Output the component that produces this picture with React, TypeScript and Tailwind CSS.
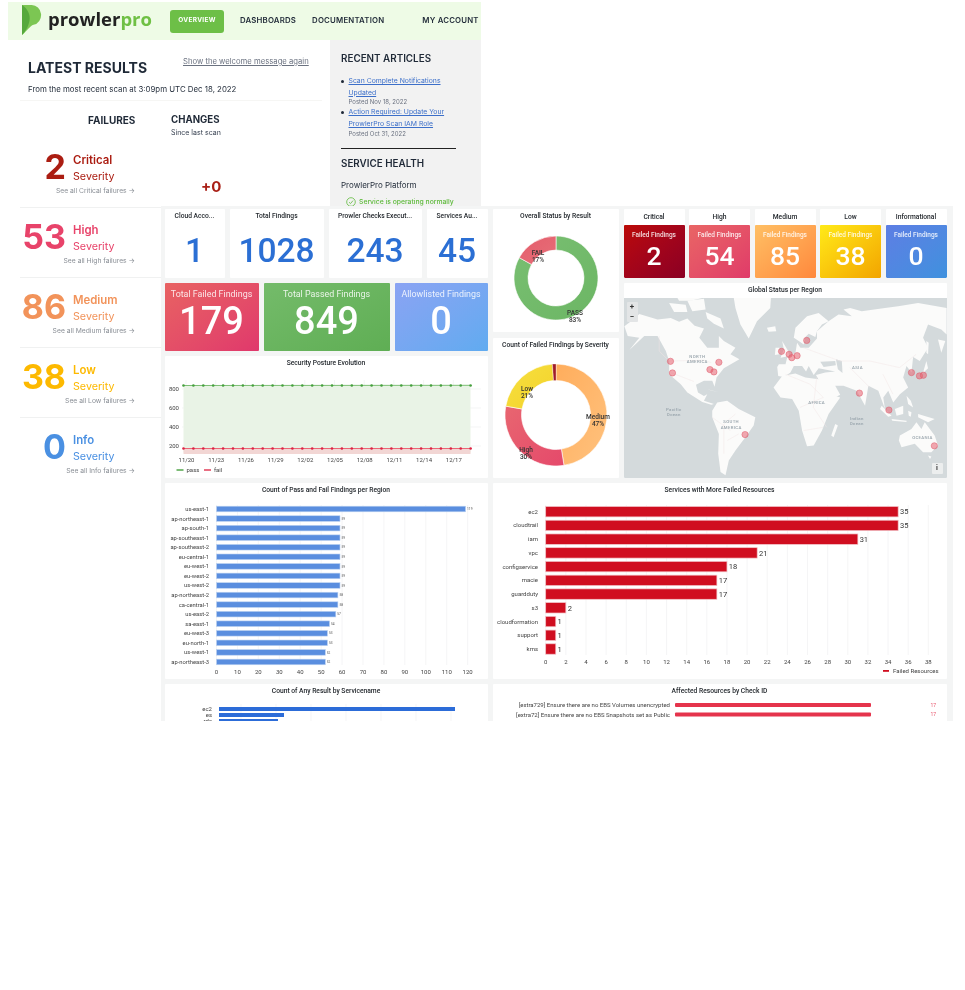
const severities = [
  { n: "53", name: "High", text: "text-[#e8436a]" },
  { n: "86", name: "Medium", text: "text-[#f2935a]" },
  { n: "38", name: "Low", text: "text-[#fdb900]" },
  { n: "0", name: "Info", text: "text-[#4a90e2]" },
];

const regions: [string, number][] = [
  ["us-east-1", 119], ["ap-northeast-1", 59], ["ap-south-1", 59], ["ap-southeast-1", 59],
  ["ap-southeast-2", 59], ["eu-central-1", 59], ["eu-west-1", 59], ["eu-west-2", 59],
  ["us-west-2", 59], ["ap-northeast-2", 58], ["ca-central-1", 58], ["us-east-2", 57],
  ["sa-east-1", 54], ["eu-west-3", 53], ["eu-north-1", 53], ["us-west-1", 52], ["ap-northeast-3", 52],
];

const services: [string, number][] = [
  ["ec2", 35], ["cloudtrail", 35], ["iam", 31], ["vpc", 21], ["configservice", 18], ["macie", 17],
  ["guardduty", 17], ["s3", 2], ["cloudformation", 1], ["support", 1], ["kms", 1],
];

const dates = ["11/20", "11/23", "11/26", "11/29", "12/02", "12/05", "12/08", "12/11", "12/14", "12/17"];

function arc(cx: number, cy: number, r: number, ir: number, from: number, to: number) {
  const p = (rad: number, deg: number) => {
    const a = ((deg - 90) * Math.PI) / 180;
    return `${(cx + rad * Math.cos(a)).toFixed(2)} ${(cy + rad * Math.sin(a)).toFixed(2)}`;
  };
  const large = to - from > 180 ? 1 : 0;
  return `M${p(r, from)}A${r} ${r} 0 ${large} 1 ${p(r, to)}L${p(ir, to)}A${ir} ${ir} 0 ${large} 0 ${p(ir, from)}Z`;
}

function Panel({ title, className, children }: { title: string; className: string; children: React.ReactNode }) {
  return (
    <div className={`flex flex-col overflow-hidden rounded-[1px] bg-white ${className}`}>
      <div className="flex h-[15px] shrink-0 items-center justify-center whitespace-nowrap text-[6.7px] font-medium text-[#24292e]">
        {title}
      </div>
      {children}
    </div>
  );
}

function Stat({ title, value, className }: { title: string; value: string; className: string }) {
  return (
    <Panel title={title} className={className}>
      <div className="flex flex-1 items-center justify-center text-[33.5px] leading-none font-medium text-[#2b6fd4]">
        {value}
      </div>
    </Panel>
  );
}

function Total({ title, value, className }: { title: string; value: string; className: string }) {
  return (
    <div className={`flex flex-col items-center rounded-[1px] pt-[3.5px] text-white ${className}`}>
      <div className="text-[8.9px] leading-[14px] text-white/85">{title}</div>
      <div className="text-[38px] leading-[40px] font-medium">{value}</div>
    </div>
  );
}

function SevCard({ title, value, className }: { title: string; value: string; className: string }) {
  return (
    <div className="flex w-[61px] flex-col overflow-hidden rounded-[1px] bg-white">
      <div className="flex h-[16px] items-center justify-center text-[6.7px] font-medium text-[#24292e]">{title}</div>
      <div className={`flex flex-1 flex-col items-center rounded-[1px] pt-[4px] text-white ${className}`}>
        <div className="text-[6.5px] leading-[12px] font-medium text-white/85">Failed Findings</div>
        <div className="text-[26.5px] leading-[30px] font-medium">{value}</div>
      </div>
    </div>
  );
}

function Logo() {
  return (
    <svg width="20" height="30" viewBox="0 0 20 30" className="-mt-[2px] shrink-0">
      <path d="M0 0H9.5a9.5 10 0 0 1 2 19.8C8 21 5 26 0 30Z" fill="#7cc653" />
      <path d="M0 0C6 4 8.500 10 7.500 15.500C6.500 22 3 27 0 30Z" fill="#55a83c" />
    </svg>
  );
}

function SecurityChart() {
  const xs = Array.from({ length: 30 }, (_, i) => 18.5 + i * 9.9);
  return (
    <svg viewBox="0 15 323 107" className="block h-full w-full">
      {[33, 52, 71, 90].map((y) => <line key={y} x1="17" x2="316" y1={y} y2={y} stroke="#eceeef" strokeWidth="0.6" />)}
      {dates.map((_, i) => <line key={i} x1={21 + i * 29.7} x2={21 + i * 29.7} y1="24" y2="97" stroke="#eceeef" strokeWidth="0.6" />)}
      <rect x="18.500" y="29.500" width="287" height="67" fill="#e9f3e6" />
      <rect x="18.500" y="92" width="287" height="6" fill="#f2d6d4" />
      <line x1="18.500" x2="305.500" y1="29.500" y2="29.300" stroke="#5cae52" strokeWidth="0.8" />
      <line x1="18.500" x2="305.500" y1="92.500" y2="92.500" stroke="#e8475e" strokeWidth="0.8" />
      {xs.map((x) => <circle key={x} cx={x} cy="29.500" r="1.300" fill="#46a03e" />)}
      {xs.map((x) => <circle key={x} cx={x} cy="92.500" r="1.300" fill="#dd2343" />)}
      {[["800", 33], ["600", 52], ["400", 71], ["200", 90]].map(([t, y]) => (
        <text key={t} x="14" y={Number(y) + 2.200} textAnchor="end" fontSize="6" fill="#444">{t}</text>
      ))}
      {dates.map((d, i) => <text key={d} x={21.500 + i * 29.7} y="106" textAnchor="middle" fontSize="6" fill="#444">{d}</text>)}
      <rect x="11.500" y="113.300" width="7" height="1.400" fill="#46a03e" />
      <text x="21.500" y="116" fontSize="6" fill="#444">pass</text>
      <rect x="39" y="113.300" width="7" height="1.400" fill="#e0324f" />
      <text x="49" y="116" fontSize="6" fill="#444">fail</text>
    </svg>
  );
}

function StatusDonut() {
  return (
    <svg viewBox="0 15 126 108" className="block h-full w-full">
      <defs>
        <linearGradient id="pass" x1="0" y1="0" x2="1" y2="1"><stop stopColor="#79bf72" /><stop offset="1" stopColor="#6cb664" /></linearGradient>
        <linearGradient id="fail" x1="0" y1="0" x2="1" y2="1"><stop stopColor="#e55d6c" /><stop offset="1" stopColor="#e66f78" /></linearGradient>
      </defs>
      <path d={arc(63, 69, 42, 28, 0, 299)} fill="url(#pass)" stroke="#fff" strokeWidth="0.6" />
      <path d={arc(63, 69, 42, 28, 299, 360)} fill="url(#fail)" stroke="#fff" strokeWidth="0.6" />
      <text fontSize="6.5" fontWeight="500" fill="#333" textAnchor="middle">
        <tspan x="45" y="46">FAIL</tspan><tspan x="45" y="53">17%</tspan>
        <tspan x="82" y="106">PASS</tspan><tspan x="82" y="113">83%</tspan>
      </text>
    </svg>
  );
}

function SeverityDonut() {
  return (
    <svg viewBox="0 15 126 125" className="block h-full w-full">
      <defs>
        <linearGradient id="med" x1="0" y1="0" x2="1" y2="1"><stop stopColor="#ffad5c" /><stop offset="1" stopColor="#ffc27e" /></linearGradient>
        <linearGradient id="high" x1="0" y1="0" x2="1" y2="1"><stop stopColor="#e86670" /><stop offset="1" stopColor="#e5496b" /></linearGradient>
        <linearGradient id="low" x1="0" y1="0" x2="1" y2="1"><stop stopColor="#f6e040" /><stop offset="1" stopColor="#f4d22a" /></linearGradient>
      </defs>
      <path d={arc(63, 77, 51, 34.500, 0, 171)} fill="url(#med)" stroke="#fff" strokeWidth="0.6" />
      <path d={arc(63, 77, 51, 34.500, 171, 280)} fill="url(#high)" stroke="#fff" strokeWidth="0.6" />
      <path d={arc(63, 77, 51, 34.500, 280, 356)} fill="url(#low)" stroke="#fff" strokeWidth="0.6" />
      <path d={arc(63, 77, 51, 34.500, 356, 360)} fill="#a01c28" stroke="#fff" strokeWidth="0.3" />
      <text fontSize="6.5" fontWeight="500" fill="#333" textAnchor="middle">
        <tspan x="34" y="53">Low</tspan><tspan x="34" y="60">21%</tspan>
        <tspan x="105" y="81">Medium</tspan><tspan x="105" y="88">47%</tspan>
        <tspan x="33" y="114">High</tspan><tspan x="33" y="121">30%</tspan>
      </text>
    </svg>
  );
}

const land = [
  // north america
  "M0 85L20 70L45 48L100 65L140 60L165 72L190 62L212 84L240 92L226 120L250 150L285 150L285 115L300 130L335 150L320 170L347 185L300 212L278 240L272 268L265 250L240 250L216 262L222 285L240 296L250 290L240 310L270 320L262 322L235 314L190 285L170 260L135 230L135 190L125 160L100 115L60 115L15 157L45 120L10 115Z",
  "M135 15L185 20L190 42L150 42Z",
  "M190 8L240 2L245 35L205 40Z",
  "M245 42L290 62L300 92L270 78L250 62Z",
  "M160 0L235 0L200 8L165 8Z",
  // greenland, iceland, cuba
  "M330 0L442 0L440 30L400 70L375 122L350 80L335 30Z",
  "M430 90L455 85L458 100L435 102Z",
  "M250 275L285 284L262 279Z",
  // south america
  "M280 315L310 310L345 335L395 360L390 385L365 420L335 460L315 490L305 535L290 525L283 470L285 410L265 360L265 340Z",
];

const landEast = [
  // uk and ireland
  "M-10 130L8 160L12 175L-15 180L-5 155Z",
  "M-30 150L-18 150L-18 170L-32 172Z",
  // scandinavia
  "M25 120L30 90L65 55L100 45L130 70L110 80L95 100L90 118L70 108L60 118L55 140L40 130Z",
  // eurasia
  "M-25 208L-20 200L0 200L5 180L30 165L35 135L45 150L70 150L95 122L95 100L130 70L160 50L200 55L175 35L195 30L230 40L300 30L340 25L400 15L486 30L486 110L470 95L430 80L415 120L430 150L405 190L385 178L380 225L365 205L355 240L370 270L345 290L325 315L310 280L295 300L300 335L280 280L250 265L240 325L215 280L175 265L150 265L165 292L120 315L110 265L92 232L120 225L150 222L100 212L85 232L70 205L62 222L50 205L25 205L15 225L-5 238L-22 235Z",
  // africa
  "M-36 270L-10 235L30 228L60 240L100 245L115 250L135 290L165 300L130 350L110 400L85 445L65 447L50 400L40 340L20 305L-15 300Z",
  "M150 380L158 385L145 420L138 415Z",
  // islands
  "M290 325L320 355L310 358L285 335Z",
  "M330 335L355 325L355 350L335 355Z",
  "M320 365L365 370L365 374L322 370Z",
  "M370 340L380 345L378 358L372 355Z",
  "M400 350L450 365L430 375L400 360Z",
  "M365 295L378 310L385 330L370 320Z",
  "M415 225L425 190L430 212L400 240Z",
  "M425 130L432 135L430 170L425 165Z",
  "M460 125L482 130L470 165Z",
  // australia
  "M345 415L380 395L395 375L410 395L420 375L450 415L460 445L440 465L415 465L390 440L350 450L342 430Z",
  "M430 475L440 478L436 486Z",
];

const borders = [
  "M105 115L105 160L135 190L240 188L262 195M140 225L210 252",
  "M335 350L300 380L300 470M265 360L320 400M345 410L310 430",
  "M486 230L560 260L600 300L530 330M580 240L570 330L610 390M540 400L600 390",
  "M540 150L650 190L740 190L830 210L880 170M680 210L740 270M780 230L810 290",
];

const markers = [
  [139, 191], [145, 226], [258, 216], [270, 223], [285, 194], [364, 412], [474, 161],
  [550, 128], [497, 170], [505, 180], [521, 174], [709, 287], [798, 338], [866, 225], [890, 235], [902, 233], [935, 446],
];

const mapLabels: [string, number, number][] = [
  ["NORTH", 220, 180], ["AMERICA", 220, 197], ["SOUTH", 322, 378], ["AMERICA", 322, 394], ["Pacific", 149, 340],
  ["Ocean", 149, 356], ["AFRICA", 580, 319], ["ASIA", 703, 214], ["Indian", 701, 368], ["Ocean", 701, 384], ["OCEANIA", 899, 426],
];

function WorldMap() {
  return (
    <div className="relative min-h-0 flex-1 overflow-hidden bg-[#d4dadc]">
      <svg viewBox="0 0 972 543" className="block h-full w-full">
        {land.map((d) => <path key={d} d={d} fill="#fbfbfa" />)}
        <g transform="translate(486 0)">
          {landEast.map((d) => <path key={d} d={d} fill="#fbfbfa" />)}
          <path d="M105 192L150 190L152 203L115 208Z" fill="#d4dadc" />
          <path d="M152 185L170 190L172 226L158 215Z" fill="#d4dadc" />
        </g>
        <path d={borders.join("")} fill="none" stroke="#f2e6e6" strokeWidth="1.500" />
        {mapLabels.map(([t, x, y], i) => (
          <text key={i} x={x} y={y} textAnchor="middle" fontSize="13" fontWeight="500" letterSpacing="1" fill="#97a3ab">{t}</text>
        ))}
        {markers.map(([x, y]) => (
          <circle key={`${x}-${y}`} cx={x} cy={y} r="9.500" fill="#e8606f" fillOpacity="0.55" stroke="#dc5a6a" strokeWidth="1.500" />
        ))}
      </svg>
      <div className="absolute top-[4px] left-[3px] flex h-[20px] w-[11px] flex-col items-center rounded-[1px] bg-[#e3e5e6] text-[8px] leading-[10px] font-bold text-[#333]">
        <span>+</span>
        <span>−</span>
      </div>
      <div className="absolute right-[4px] bottom-[4px] flex h-[11px] w-[11px] items-center justify-center rounded-[1px] bg-[#eceeee] text-[7px] font-bold text-[#333]">
        i
      </div>
    </div>
  );
}

function RegionChart() {
  return (
    <svg viewBox="0 15 323 181" className="block h-full w-full">
      {Array.from({ length: 13 }, (_, i) => (
        <g key={i}>
          <line x1={51.500 + i * 20.930} x2={51.500 + i * 20.930} y1="22" y2="182" stroke="#f0f1f2" strokeWidth="0.7" />
          <text x={51.500 + i * 20.930} y="190.500" textAnchor="middle" fontSize="6" fill="#444">{i * 10}</text>
        </g>
      ))}
      {regions.map(([name, v], i) => {
        const y = 26 + i * 9.560;
        return (
          <g key={name}>
            <text x="44" y={y + 2} textAnchor="end" fontSize="5.800" fill="#444">{name}</text>
            <rect x="51.500" y={y - 2.800} width={v * 2.093} height="5.600" fill="#5a8edf" stroke="#bcd2f1" strokeWidth="0.6" />
            <text x={53 + v * 2.093} y={y + 1.200} fontSize="3.200" fill="#555">{v}</text>
          </g>
        );
      })}
    </svg>
  );
}

function ServiceChart() {
  return (
    <svg viewBox="0 15 454 181" className="block h-full w-full">
      {Array.from({ length: 20 }, (_, i) => (
        <g key={i}>
          <line x1={52.700 + i * 20.140} x2={52.700 + i * 20.140} y1="22" y2="172" stroke="#f0f1f2" strokeWidth="0.7" />
          <text x={52.700 + i * 20.140} y="181" textAnchor="middle" fontSize="6" fill="#444">{i * 2}</text>
        </g>
      ))}
      {services.map(([name, v], i) => {
        const y = 28.700 + i * 13.730;
        return (
          <g key={name}>
            <text x="45" y={y + 2} textAnchor="end" fontSize="6" fill="#444">{name}</text>
            <rect x="52.700" y={y - 5.200} width={v * 10.070} height="10.400" fill="#d00e20" stroke="#f3c3c8" strokeWidth="0.7" />
            <text x={54.500 + v * 10.070} y={y + 2.700} fontSize="7.500" fill="#333">{v}</text>
          </g>
        );
      })}
      <rect x="390" y="187" width="6" height="1.800" fill="#d00e20" />
      <text x="400" y="190.300" fontSize="6" fill="#444">Failed Resources</text>
    </svg>
  );
}

export default function App() {
  return (
    <div className="h-[990px] w-[965px] overflow-hidden bg-white pt-[2px] font-['Inter',sans-serif] text-[#1f2937] blur-[0.5px]">
      {/* Portal header */}
      <div className="ml-[8px] flex h-[38px] w-[473px] items-center bg-[#eefbe6]">
        <div className="ml-[14px] flex w-[148px] items-center">
          <Logo />
          <span className="-mt-[3px] ml-[6px] font-['Open_Sans',sans-serif] text-[18.5px] leading-none font-bold text-[#222]">
            prowler<span className="text-[#6fc044]">pro</span>
          </span>
        </div>
        <div className="flex h-[23px] w-[54px] items-center justify-center rounded-[3px] bg-[#6dbf47] text-[6.5px] font-bold tracking-[0.3px] text-white">
          OVERVIEW
        </div>
        <div className="ml-[16px] text-[7.8px] font-semibold tracking-[0.2px] whitespace-nowrap">DASHBOARDS</div>
        <div className="ml-[16px] text-[7.8px] font-semibold tracking-[0.2px] whitespace-nowrap">DOCUMENTATION</div>
        <div className="ml-[38px] text-[7.8px] font-semibold tracking-[0.2px] whitespace-nowrap">MY ACCOUNT</div>
      </div>

      <div className="ml-[8px] flex h-[166px] w-[473px] overflow-hidden">
        <div className="w-[322px] pl-[20px]">
          <div className="flex items-start pt-[14px]">
            <h1 className="mt-[4px] w-[155px] text-[14px] leading-[20px] font-bold">LATEST RESULTS</h1>
            <a className="text-[7.7px] leading-[16px] whitespace-nowrap text-[#6b7280] underline">Show the welcome message again</a>
          </div>
          <div className="mt-[4px] text-[7.85px] leading-[14px]">From the most recent scan at 3:09pm UTC Dec 18, 2022</div>
          <div className="mt-[4px] mr-[8px] -ml-[8px] border-t border-[#f6f6f4]" />
          <div className="mt-[11px] flex">
            <div className="ml-[60px] w-[83px] text-[10px] leading-[16px] font-bold">FAILURES</div>
            <div>
              <div className="text-[9.7px] leading-[16px] font-bold">CHANGES</div>
              <div className="text-[7px] leading-[9px] text-[#374151]">Since last scan</div>
            </div>
          </div>
          <div className="mt-[11px] flex">
            <div className="w-[107px]">
              <div className="flex h-[38px]">
                <div className="w-[38px] text-right text-[34px] leading-[38px] font-bold text-[#ab1d12]">2</div>
                <div className="mt-[5px] ml-[7px] leading-[15.5px] text-[#ab1d12]">
                  <div className="text-[11.4px] font-semibold">Critical</div>
                  <div className="text-[10.7px]">Severity</div>
                </div>
              </div>
              <div className="text-right text-[6.75px] leading-[9px] whitespace-nowrap text-[#8a8f96]">See all Critical failures →</div>
            </div>
            <div className="mt-[29px] ml-[66px] text-[15px] leading-[20px] font-bold text-[#a92017]">+0</div>
          </div>
        </div>
        <div className="w-[151px] bg-[#f2f2f2] pl-[11px]">
          <div className="pt-[11px] text-[9.85px] leading-[14px] font-semibold">RECENT ARTICLES</div>
          <ul className="mt-[10px] text-[6.85px]">
            {[
              ["Scan Complete Notifications Updated", "Posted Nov 18, 2022"],
              ["Action Required: Update Your ProwlerPro Scan IAM Role", "Posted Oct 31, 2022"],
            ].map(([title, date]) => (
              <li key={title} className="flex">
                <span className="mt-[5px] h-[2.500px] w-[2.500px] shrink-0 rounded-full bg-[#1f2937]" />
                <div className="ml-[5px] w-[110px]">
                  <a className="block leading-[11.700px] text-[#3c6fc9] underline">{title}</a>
                  <div className="text-[6px] leading-[8px] text-[#6b7280]">{date}</div>
                </div>
              </li>
            ))}
          </ul>
          <div className="mt-[10px] h-[1px] w-[115px] bg-[#222]" />
          <div className="mt-[7px] text-[9.85px] leading-[14px] font-semibold">SERVICE HEALTH</div>
          <div className="mt-[9px] text-[8px] leading-[12px]">ProwlerPro Platform</div>
          <div className="mt-[6px] ml-[5px] flex items-center text-[6.8px] font-medium text-[#5fba3c]">
            <svg width="10" height="10" viewBox="0 0 10 10" fill="none" stroke="#5fba3c" strokeWidth="0.8">
              <circle cx="5" cy="5" r="4.300" />
              <path d="M3 5.200L4.500 6.600L7 3.600" />
            </svg>
            <span className="ml-[3px] whitespace-nowrap">Service is operating normally</span>
          </div>
        </div>
      </div>

      <div className="flex">
        {/* Severity rows */}
        <div className="ml-[20px] w-[141px] pt-[1px]">
          {severities.map((s) => (
            <div key={s.name} className="h-[70px] border-t border-[#f0f1f1] pt-[10px]">
              <div className="flex h-[38px] w-[115px]">
                <div className={`w-[46px] text-right text-[34px] leading-[38px] font-bold ${s.text}`}>{s.n}</div>
                <div className={`mt-[5px] ml-[7px] leading-[15.5px] ${s.text}`}>
                  <div className="text-[11.4px] font-semibold">{s.name}</div>
                  <div className="text-[10.7px]">Severity</div>
                </div>
              </div>
              <div className="w-[115px] text-right text-[6.75px] leading-[9px] whitespace-nowrap text-[#8a8f96]">See all {s.name} failures →</div>
            </div>
          ))}
        </div>

        {/* Dashboard */}
        <div className="flex h-[515px] w-[792px] flex-col gap-[5px] overflow-hidden bg-[#f4f5f5] pt-[3px] pl-[3.500px] font-['Roboto',sans-serif]">
          <div className="flex h-[269px] shrink-0 gap-[5px]">
            <div className="flex w-[323px] flex-col gap-[5px]">
              <div className="flex h-[69px] gap-[5px]">
                <Stat title="Cloud Acco..." value="1" className="w-[60px]" />
                <Stat title="Total Findings" value="1028" className="w-[94px]" />
                <Stat title="Prowler Checks Execut..." value="243" className="w-[93px]" />
                <Stat title="Services Au..." value="45" className="w-[61px]" />
              </div>
              <div className="flex h-[68px] gap-[5px]">
                <Total title="Total Failed Findings" value="179" className="w-[94px] bg-linear-to-br from-[#e86262] to-[#e0386c]" />
                <Total title="Total Passed Findings" value="849" className="w-[126px] bg-linear-to-br from-[#74bb6a] to-[#5fae54]" />
                <Total title="Allowlisted Findings" value="0" className="w-[93px] bg-linear-to-br from-[#8aa3f3] to-[#60abf0]" />
              </div>
              <Panel title="Security Posture Evolution" className="h-[122px]">
                <SecurityChart />
              </Panel>
            </div>
            <div className="flex w-[126px] flex-col gap-[6px]">
              <Panel title="Overall Status by Result" className="h-[123px]">
                <StatusDonut />
              </Panel>
              <Panel title="Count of Failed Findings by Severity" className="h-[140px]">
                <SeverityDonut />
              </Panel>
            </div>
            <div className="flex w-[323px] flex-col gap-[5px]">
              <div className="flex h-[69px] gap-[4.500px]">
                <SevCard title="Critical" value="2" className="bg-linear-to-br from-[#bb0a05] to-[#8b0023]" />
                <SevCard title="High" value="54" className="bg-linear-to-br from-[#e96565] to-[#e03a69]" />
                <SevCard title="Medium" value="85" className="bg-linear-to-br from-[#ffbf64] to-[#ff883c]" />
                <SevCard title="Low" value="38" className="bg-linear-to-br from-[#ffea18] to-[#f2a400]" />
                <SevCard title="Informational" value="0" className="bg-linear-to-br from-[#5d7ee4] to-[#3e91de]" />
              </div>
              <Panel title="Global Status per Region" className="h-[195px]">
                <WorldMap />
              </Panel>
            </div>
          </div>

          <div className="flex h-[196px] shrink-0 gap-[5px]">
            <Panel title="Count of Pass and Fail Findings per Region" className="w-[323px]">
              <RegionChart />
            </Panel>
            <Panel title="Services with More Failed Resources" className="w-[454px]">
              <ServiceChart />
            </Panel>
          </div>

          <div className="flex h-[60px] shrink-0 gap-[5px]">
            <Panel title="Count of Any Result by Servicename" className="w-[323px]">
              <svg viewBox="0 15 323 45" className="block h-full w-full">
                {[76, 111, 146, 181, 216, 251, 286].map((x) => <line key={x} x1={x} x2={x} y1="20" y2="60" stroke="#f0f1f2" strokeWidth="0.7" />)}
                {[["ec2", 236, 25], ["es", 65, 31], ["rds", 59, 37]].map(([t, w, y]) => (
                  <g key={t}>
                    <text x="47" y={Number(y) + 2} textAnchor="end" fontSize="6" fill="#444">{t}</text>
                    <rect x="54" y={Number(y) - 2} width={w} height="4" fill="#2c6cd8" />
                  </g>
                ))}
              </svg>
            </Panel>
            <Panel title="Affected Resources by Check ID" className="w-[454px]">
              <svg viewBox="0 15 454 45" className="block h-full w-full">
                {[["[extra729] Ensure there are no EBS Volumes unencrypted", 21], ["[extra72] Ensure there are no EBS Snapshots set as Public", 30.500]].map(([t, y]) => (
                  <g key={y}>
                    <text x="177" y={Number(y) + 2} textAnchor="end" fontSize="6" fill="#444">{t}</text>
                    <rect x="182" y={Number(y) - 2} width="196" height="4" rx="1" fill="#e5344c" />
                    <text x="443" y={Number(y) + 1.500} textAnchor="end" fontSize="5" fill="#e8536a">17</text>
                  </g>
                ))}
              </svg>
            </Panel>
          </div>
        </div>
      </div>
    </div>
  );
}
